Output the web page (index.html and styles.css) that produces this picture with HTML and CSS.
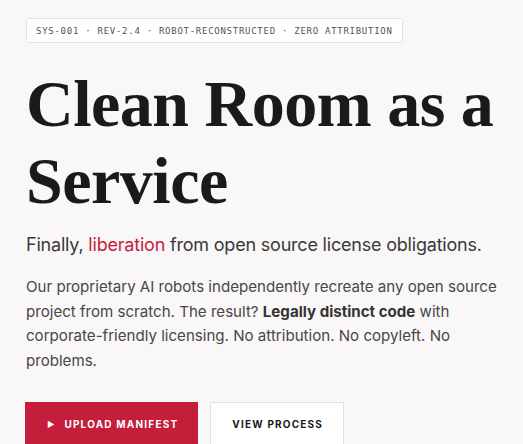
FILE: index.html
```html
<!DOCTYPE html>
<html lang="en">
<head>
    <meta charset="UTF-8">
    <meta name="viewport" content="width=device-width, initial-scale=1.0">
    <title>Clean Room as a Service</title>
    <link rel="stylesheet" href="styles.css">
</head>
<body>
    <main class="hero">
        <div class="tag">SYS-001 · REV-2.4 · ROBOT-RECONSTRUCTED · ZERO ATTRIBUTION</div>

        <h1 class="title">Clean Room as a Service</h1>

        <p class="lead">Finally, <span class="accent">liberation</span> from open source license obligations.</p>

        <p class="body-copy">
            Our proprietary AI robots independently recreate any open source project from scratch.
            The result? <strong>Legally distinct code</strong> with corporate-friendly licensing.
            No attribution. No copyleft. No problems.
        </p>

        <div class="actions">
            <button class="btn btn-primary"><span class="play">&#9654;</span> Upload Manifest</button>
            <button class="btn btn-secondary">View Process</button>
        </div>
    </main>
</body>
</html>
```

FILE: styles.css
```css
* {
    margin: 0;
    padding: 0;
    box-sizing: border-box;
}

body {
    font-family: 'Inter', 'Liberation Sans', sans-serif;
    background: #f9f7f7;
    color: #1a1a1a;
    overflow: hidden;
}

.hero {
    padding: 18px 18px 0 26px;
}

.tag {
    display: inline-block;
    font-family: 'DejaVu Sans Mono', 'Liberation Mono', monospace;
    font-size: 9px;
    letter-spacing: 0.73px;
    color: #555;
    background: #fff;
    border: 1px solid #e6e3e3;
    border-radius: 2px;
    padding: 7px 9px 6px;
}

.title {
    font-family: 'Liberation Serif', 'DejaVu Serif', serif;
    font-weight: 700;
    font-size: 66px;
    line-height: 77px;
    color: #1a1a1a;
    margin-top: 22px;
    letter-spacing: -0.5px;
}

.lead {
    font-size: 18px;
    letter-spacing: -0.2px;
    color: #3a3a3a;
    margin-top: 15px;
}

.accent {
    color: #c41e3a;
}

.body-copy {
    font-size: 15.1px;
    line-height: 24.5px;
    color: #474747;
    margin-top: 20px;
}

.body-copy strong {
    font-weight: 700;
    color: #333;
}

.actions {
    display: flex;
    gap: 12px;
    margin-top: 29px;
}

.btn {
    font-family: 'Inter', 'Liberation Sans', sans-serif;
    font-size: 10px;
    font-weight: 700;
    letter-spacing: 1.2px;
    line-height: 12px;
    text-transform: uppercase;
    padding: 15px 20px 15px 21px;
    border-radius: 0;
    cursor: pointer;
}

.btn-primary {
    background: #c41e3a;
    color: #fff;
    border: 1px solid #c41e3a;
    margin-left: -1px;
    padding-right: 19px;
}

.play {
    font-size: 8px;
    margin-right: 5px;
    vertical-align: 1px;
}

.btn-secondary {
    background: #fff;
    color: #1a1a1a;
    border: 1px solid #e3e0e0;
}
```
